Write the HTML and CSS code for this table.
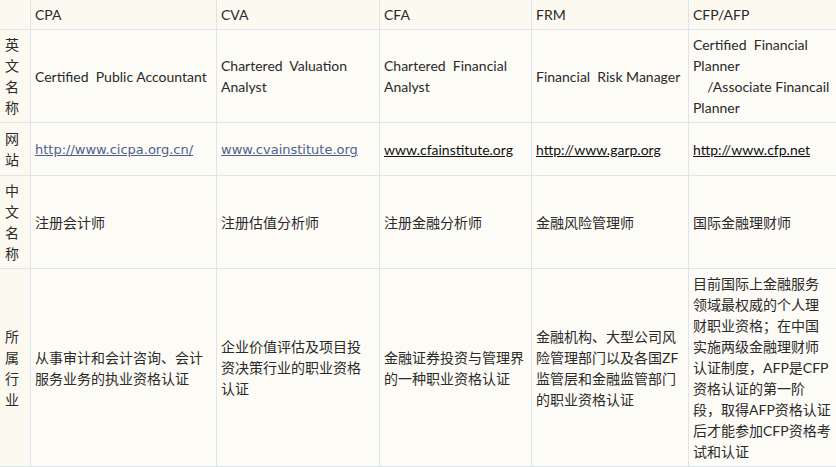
FILE: index.html
```
<!DOCTYPE html>
<html lang="zh-CN">
<head>
<meta charset="utf-8">
<title>金融资格认证对比</title>
<link rel="stylesheet" href="styles.css">
</head>
<body>
<table class="cmp">
  <colgroup>
    <col class="c0"><col class="c1"><col class="c2"><col class="c3"><col class="c4"><col class="c5">
  </colgroup>
  <tr class="head">
    <td class="lab"></td>
    <td>CPA</td>
    <td>CVA</td>
    <td>CFA</td>
    <td>FRM</td>
    <td>CFP/AFP</td>
  </tr>
  <tr>
    <td class="lab">英文名称</td>
    <td>Certified&nbsp; Public Accountant</td>
    <td>Chartered&nbsp; Valuation<br>Analyst</td>
    <td>Chartered&nbsp; Financial<br>Analyst</td>
    <td>Financial&nbsp; Risk Manager</td>
    <td>Certified&nbsp; Financial<br>Planner<br>&nbsp;&nbsp;&nbsp; /Associate Financail<br>Planner</td>
  </tr>
  <tr class="site">
    <td class="lab">网站</td>
    <td><a class="blue" href="#">http://www.cicpa.org.cn/</a></td>
    <td><a class="blue" href="#">www.cvainstitute.org</a></td>
    <td><a class="black" href="#">www.cfainstitute.org</a></td>
    <td><a class="black" href="#">http://www.garp.org</a></td>
    <td><a class="black" href="#">http://www.cfp.net</a></td>
  </tr>
  <tr>
    <td class="lab">中文名称</td>
    <td>注册会计师</td>
    <td>注册估值分析师</td>
    <td>注册金融分析师</td>
    <td>金融风险管理师</td>
    <td>国际金融理财师</td>
  </tr>
  <tr>
    <td class="lab">所属行业</td>
    <td>从事审计和会计咨询、会计服务业务的执业资格认证</td>
    <td>企业价值评估及项目投资决策行业的职业资格认证</td>
    <td>金融证券投资与管理界的一种职业资格认证</td>
    <td>金融机构、大型公司风险管理部门以及各国ZF监管层和金融监管部门的职业资格认证</td>
    <td>目前国际上金融服务领域最权威的个人理财职业资格；在中国实施两级金融理财师认证制度，AFP是CFP资格认证的第一阶段，取得AFP资格认证后才能参加CFP资格考试和认证</td>
  </tr>
</table>
</body>
</html>
```
FILE: styles.css
```
html, body {
  margin: 0;
  padding: 0;
  background: #fdfbf6;
}
.cmp {
  border-collapse: collapse;
  table-layout: fixed;
  width: 838px;
  margin-left: -1px;
  margin-top: -1px;
  font-family: "Lato", "Noto Sans CJK SC", sans-serif;
  font-size: 14px;
  line-height: 21px;
  color: #2a2a2a;
}
.c0 { width: 31px; }
.c1 { width: 186px; }
.c2 { width: 163px; }
.c3 { width: 152px; }
.c4 { width: 157px; }
.c5 { width: 149px; }
.cmp td {
  border: 1px solid #dfe3ea;
  padding: 4px 6px 4px 4px;
  vertical-align: middle;
  background: #fdfbf6;
}
.cmp td.lab {
  padding: 4px 3px 4px 5px;
  background: #fcf9f0;
}
.head td {
  background: #fcf9f0;
}
.site td {
  height: 44px;
}
a.blue {
  font-family: "DejaVu Sans", sans-serif;
  font-size: 13px;
  color: #4f5f8e;
  text-decoration: underline;
}
a.black {
  color: #111;
  text-decoration: underline;
}
```
